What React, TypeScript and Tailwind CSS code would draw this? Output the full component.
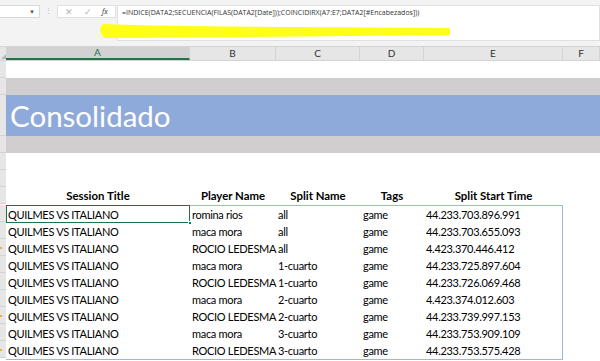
import React from "react";

const cols = [
  { key: "A", w: "w-[184px]" },
  { key: "B", w: "w-[86px]" },
  { key: "C", w: "w-[84px]" },
  { key: "D", w: "w-[64px]" },
  { key: "E", w: "w-[139px]" },
  { key: "F", w: "flex-1" },
];

const rows = [
  ["romina rios", "all", "44.233.703.896.991"],
  ["maca mora", "all", "44.233.703.655.093"],
  ["ROCIO LEDESMA", "all", "4.423.370.446.412"],
  ["maca mora", "1-cuarto", "44.233.725.897.604"],
  ["ROCIO LEDESMA", "1-cuarto", "44.233.726.069.468"],
  ["maca mora", "2-cuarto", "4.423.374.012.603"],
  ["ROCIO LEDESMA", "2-cuarto", "44.233.739.997.153"],
  ["maca mora", "3-cuarto", "44.233.753.909.109"],
  ["ROCIO LEDESMA", "3-cuarto", "44.233.753.575.428"],
];

const marks = [2, 6, 8];

const RowHead = ({ h, mark }: { h: string; mark?: boolean }) => (
  <div className={`relative w-[6px] shrink-0 ${h} bg-[#e6e6e6] border-b border-[#d4d4d4]`}>
    {mark && <span className="absolute left-0 top-1/2 w-[2px] h-[2px] bg-[#e8b04a]" />}
  </div>
);

export default function App() {
  return (
    <div className="w-[600px] h-[361px] overflow-hidden bg-white relative" style={{ fontFamily: "Lato, 'Open Sans', sans-serif" }}>
      {/* toolbar / formula bar */}
      <div className="h-[47px] bg-[#f3f3f3] flex items-start pt-[5px] border-b border-[#d4d4d4]">
        <div className="w-[40px] h-[13px] bg-white border border-[#dadada] border-l-0 flex items-center justify-end pr-[4px]">
          <span className="text-[6px] text-[#555]">▼</span>
        </div>
        <div className="w-[17px] flex justify-center pt-[2px]">
          <span className="text-[7px] leading-none text-[#b0b0b0]">⋮</span>
        </div>
        <div className="w-[59px] h-[13px] bg-white border border-[#e0e0e0] flex items-center justify-around px-[2px] text-[9px] text-[#b5b5b5]">
          <span>✕</span>
          <span>✓</span>
          <span className="italic text-[#555] font-serif text-[8px]">fx</span>
        </div>
        <div className="ml-[1px] flex-1 h-[36px] bg-white border border-[#e0e0e0] pl-[4px] pt-[3px]">
          <div className="text-[7px] text-[#333] leading-none whitespace-nowrap" style={{ fontFamily: "'Open Sans', sans-serif" }}>
            =INDICE(DATA2;SECUENCIA(FILAS(DATA2[Date]));COINCIDIRX(A7:E7;DATA2[#Encabezados]))
          </div>
        </div>
      </div>

      {/* yellow highlighter */}
      <svg className="absolute left-0 top-0 pointer-events-none" width="600" height="47">
        <path d="M103 24 C 180 27, 300 27, 450 28 L 450 35 C 320 36, 200 38, 105 38 C 99 34, 99 27, 103 24 Z" fill="#ffff1a" />
      </svg>

      {/* column headers */}
      <div className="flex h-[14px] bg-[#e6e6e6] border-b border-[#d4d4d4] text-[10px] text-[#333]">
        <div className="w-[6px] shrink-0 relative">
          <span className="absolute right-0 bottom-[1px] w-0 h-0 border-l-[5px] border-l-transparent border-b-[5px] border-b-[#b9b9b9]" />
        </div>
        {cols.map((c) => (
          <div
            key={c.key}
            className={`${c.w} shrink-0 flex items-center justify-center border-r border-[#d4d4d4] ${
              c.key === "A" ? "bg-[#d2d2d2] text-[#217346] border-b-2 border-b-[#217346]" : ""
            }`}
          >
            {c.key}
          </div>
        ))}
      </div>

      {/* row 1 */}
      <div className="flex">
        <RowHead h="h-[17px]" />
        <div className="flex-1 h-[17px]" />
      </div>
      {/* row 2 */}
      <div className="flex">
        <RowHead h="h-[17px]" />
        <div className="flex-1 h-[17px] bg-[#d0cece]" />
      </div>
      {/* row 3 */}
      <div className="flex">
        <RowHead h="h-[41px]" />
        <div className="flex-1 h-[41px] bg-[#8eaadb] flex items-center pl-[4px]">
          <span className="text-white text-[29.5px] leading-none" style={{ fontFamily: "Lato, sans-serif" }}>
            Consolidado
          </span>
        </div>
      </div>
      {/* row 4 */}
      <div className="flex">
        <RowHead h="h-[17px]" />
        <div className="flex-1 h-[17px] bg-[#d0cece]" />
      </div>
      {/* rows 5, 6 */}
      <div className="flex">
        <RowHead h="h-[17px]" />
        <div className="flex-1 h-[17px]" />
      </div>
      <div className="flex">
        <RowHead h="h-[17px]" />
        <div className="flex-1 h-[17px]" />
      </div>

      {/* table header */}
      <div className="flex text-[11.4px] font-bold text-black">
        <RowHead h="h-[17px]" />
        <div className="w-[184px] shrink-0 text-center leading-[18px]">Session Title</div>
        <div className="w-[86px] shrink-0 text-center leading-[18px]">Player Name</div>
        <div className="w-[84px] shrink-0 text-center leading-[18px]">Split Name</div>
        <div className="w-[64px] shrink-0 text-center leading-[18px]">Tags</div>
        <div className="w-[139px] shrink-0 text-center leading-[18px]">Split Start Time</div>
      </div>

      {/* table body */}
      <div className="flex">
        <div className="flex flex-col">
          {rows.map((_, i) => (
            <RowHead key={i} h="h-[17px]" mark={marks.includes(i)} />
          ))}
        </div>
        <div className="relative border border-[#9bb7e6] border-l-0 w-[557px] text-[11px] tracking-[-0.3px] text-black">
          {rows.map((r, i) => (
            <div key={i} className="flex h-[17px] leading-[17px] whitespace-nowrap">
              <div className="w-[184px] shrink-0 pl-[2px]">QUILMES VS ITALIANO</div>
              <div className="w-[86px] shrink-0 pl-[2px]">{r[0]}</div>
              <div className="w-[84px] shrink-0 pl-[2px]">{r[1]}</div>
              <div className="w-[64px] shrink-0 pl-[3px]">game</div>
              <div className="w-[139px] shrink-0 pl-[2px]">{r[2]}</div>
            </div>
          ))}
          {/* active cell */}
          <div className="absolute left-0 top-[-1px] w-[184px] h-[18px] border border-[#217346]">
            <span className="absolute right-[-3px] bottom-[-3px] w-[4px] h-[4px] bg-[#217346] border border-white" />
          </div>
        </div>
      </div>
    </div>
  );
}
